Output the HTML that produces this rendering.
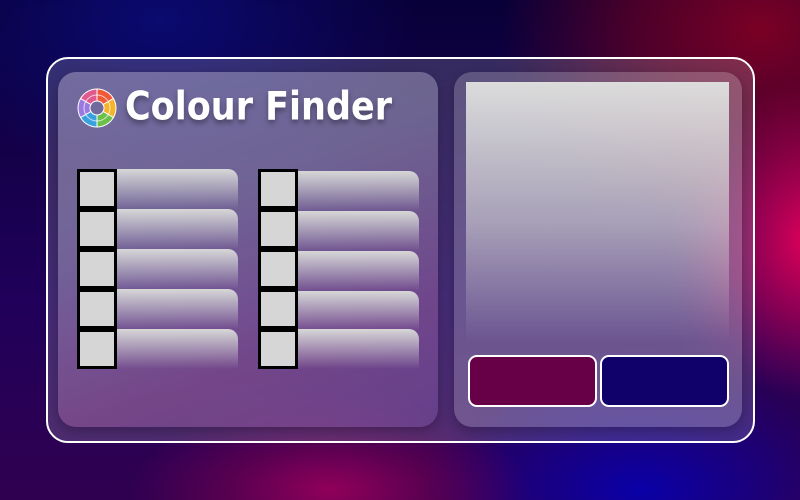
<!DOCTYPE html>
<html><head><meta charset="utf-8"><style>
*{margin:0;padding:0;box-sizing:border-box}
body{width:800px;height:500px;overflow:hidden;position:relative;font-family:"DejaVu Sans","Liberation Sans",sans-serif;
background:
radial-gradient(ellipse 130px 160px at 810px 240px,#e0005a 0%,rgba(200,0,80,0.6) 50%,rgba(200,0,80,0) 100%),
radial-gradient(ellipse 260px 200px at 760px 30px,#7a0025 0%,rgba(100,0,35,0.7) 50%,rgba(90,0,30,0) 100%),
radial-gradient(ellipse 200px 90px at 330px 490px,#90005a 0%,rgba(130,0,80,0.5) 50%,rgba(120,0,80,0) 100%),
radial-gradient(ellipse 220px 120px at 640px 490px,#0a00a8 0%,rgba(10,0,160,0.5) 55%,rgba(10,0,160,0) 100%),
radial-gradient(ellipse 260px 160px at 160px 20px,#0a0a70 0%,rgba(10,10,110,0) 100%),
linear-gradient(180deg,#080038 0%,#20005a 60%,#300050 100%);}
.outer{position:absolute;left:46px;top:57px;width:709px;height:386px;border:2px solid #fff;border-radius:22px;background:rgba(255,255,255,0.17);backdrop-filter:blur(20px)}
.panel{position:absolute;border-radius:18px;box-shadow:0 4px 12px rgba(0,0,0,0.25)}
.title{position:absolute;left:125px;top:85px;color:#fff;font-weight:bold;font-size:35px;text-shadow:0 3px 5px rgba(0,0,0,0.35);white-space:nowrap;transform:scaleY(1.12);transform-origin:left top}
.sw{position:absolute;width:40px;height:40px;background:#d6d6d6;border:3px solid #000}
.bar{position:absolute;width:121px;height:40px;border-radius:0 10px 0 0;background:linear-gradient(180deg,rgba(215,215,215,1) 0%,rgba(215,215,215,0.45) 55%,rgba(215,215,215,0) 100%)}
.btn{position:absolute;top:355px;width:129px;height:52px;border:2px solid #fff;border-radius:9px}
</style></head><body>
<div class="outer"></div>
<div class="panel" style="left:58px;top:72px;width:380px;height:355px;background:linear-gradient(160deg,rgba(210,200,225,0.4) 0%,rgba(195,195,220,0.38) 35%,rgba(210,130,190,0.3) 75%,rgba(150,110,200,0.3) 100%)"></div>
<div class="panel" style="left:454px;top:72px;width:288px;height:355px;background:rgba(255,255,255,0.2)"></div>
<div style="position:absolute;left:466px;top:82px;width:263px;height:260px;background:linear-gradient(180deg,rgba(220,220,220,1) 0%,rgba(220,220,220,0.55) 55%,rgba(220,220,220,0) 100%)"></div>
<svg style="position:absolute;left:77px;top:88px" width="40" height="40" viewBox="-20 -20 40 40">
<g stroke="#fff" stroke-width="1">
<path d="M0,-19 A19,19 0 0,1 16.45,-9.5 L6.06,-3.5 A7,7 0 0,0 0,-7Z" fill="#f05a3a"/>
<path d="M16.45,-9.5 A19,19 0 0,1 16.45,9.5 L6.06,3.5 A7,7 0 0,0 6.06,-3.5Z" fill="#f6b42a"/>
<path d="M16.45,9.5 A19,19 0 0,1 0,19 L0,7 A7,7 0 0,0 6.06,3.5Z" fill="#6cc04a"/>
<path d="M0,19 A19,19 0 0,1 -16.45,9.5 L-6.06,3.5 A7,7 0 0,0 0,7Z" fill="#3aa0e0"/>
<path d="M-16.45,9.5 A19,19 0 0,1 -16.45,-9.5 L-6.06,-3.5 A7,7 0 0,0 -6.06,3.5Z" fill="#9a7ae0"/>
<path d="M-16.45,-9.5 A19,19 0 0,1 0,-19 L0,-7 A7,7 0 0,0 -6.06,-3.5Z" fill="#e05a90"/>
<circle r="13" fill="none" stroke="rgba(255,255,255,0.7)"/>
</g></svg>
<div class="title">Colour Finder</div>
<div class="bar" style="left:117px;top:169px"></div>
<div class="bar" style="left:117px;top:209px"></div>
<div class="bar" style="left:117px;top:249px"></div>
<div class="bar" style="left:117px;top:289px"></div>
<div class="bar" style="left:117px;top:329px"></div>
<div class="bar" style="left:298px;top:171px"></div>
<div class="bar" style="left:298px;top:211px"></div>
<div class="bar" style="left:298px;top:251px"></div>
<div class="bar" style="left:298px;top:291px"></div>
<div class="bar" style="left:298px;top:329px"></div>
<div class="sw" style="left:77px;top:169px"></div>
<div class="sw" style="left:77px;top:209px"></div>
<div class="sw" style="left:77px;top:249px"></div>
<div class="sw" style="left:77px;top:289px"></div>
<div class="sw" style="left:77px;top:329px"></div>
<div class="sw" style="left:258px;top:169px"></div>
<div class="sw" style="left:258px;top:209px"></div>
<div class="sw" style="left:258px;top:249px"></div>
<div class="sw" style="left:258px;top:289px"></div>
<div class="sw" style="left:258px;top:329px"></div>
<div class="btn" style="left:468px;background:#680048"></div>
<div class="btn" style="left:600px;background:#10006a"></div>
</body></html>
